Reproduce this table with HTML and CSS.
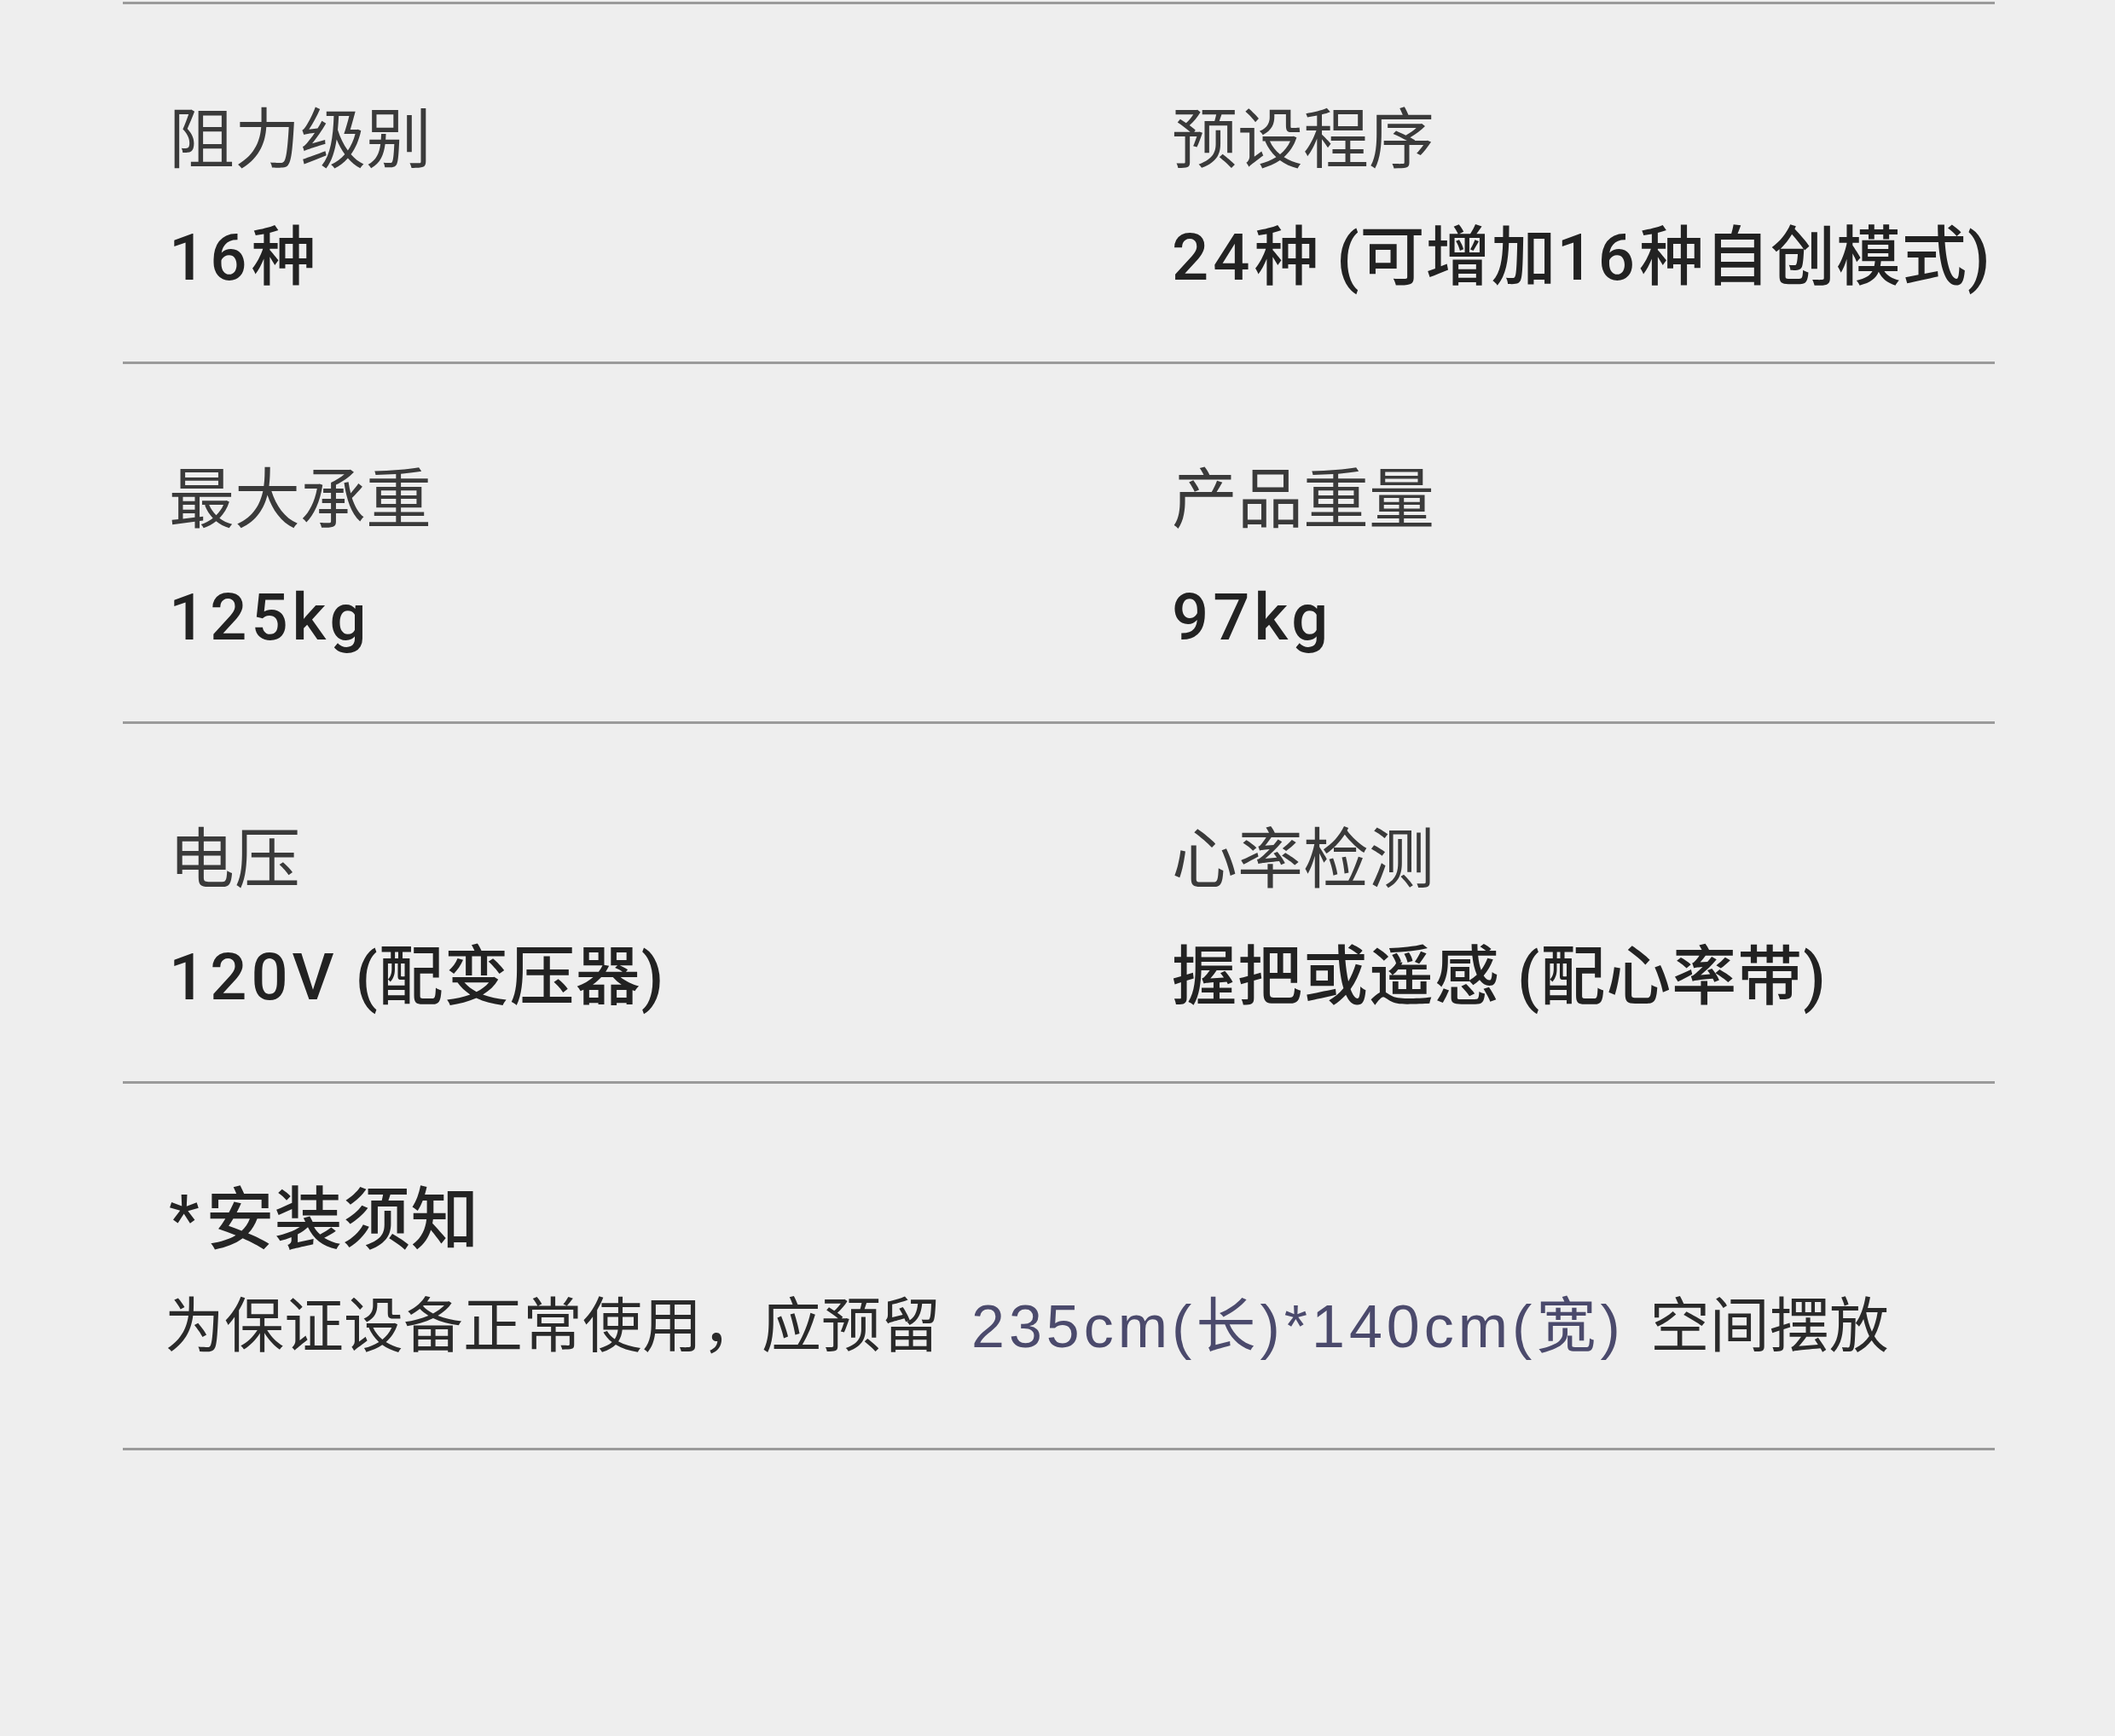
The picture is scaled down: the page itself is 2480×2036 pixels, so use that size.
FILE: index.html
```html
<!DOCTYPE html>
<html lang="zh-CN">
<head>
<meta charset="utf-8">
<title>规格参数</title>
<link rel="stylesheet" href="styles.css">
</head>
<body>
<main class="specs">
  <section class="row">
    <div class="cell">
      <div class="label">阻力级别</div>
      <div class="value"><span class="num">16</span>种</div>
    </div>
    <div class="cell">
      <div class="label">预设程序</div>
      <div class="value"><span class="num">24</span>种 (可增加<span class="num">16</span>种自创模式)</div>
    </div>
  </section>
  <section class="row">
    <div class="cell">
      <div class="label">最大承重</div>
      <div class="value"><span class="num">125kg</span></div>
    </div>
    <div class="cell">
      <div class="label">产品重量</div>
      <div class="value"><span class="num">97kg</span></div>
    </div>
  </section>
  <section class="row">
    <div class="cell">
      <div class="label">电压</div>
      <div class="value"><span class="num">120V</span> (配变压器)</div>
    </div>
    <div class="cell">
      <div class="label">心率检测</div>
      <div class="value">握把或遥感 (配心率带)</div>
    </div>
  </section>
  <section class="note">
    <div class="note-title"><span class="star">*</span>安装须知</div>
    <p class="note-text">为保证设备正常使用，应预留<span class="dim">235cm(长)*140cm(宽)</span>空间摆放</p>
  </section>
</main>
</body>
</html>
```
FILE: styles.css
```css
html, body {
  margin: 0;
  padding: 0;
  background: #eeeeee;
}
body {
  width: 2480px;
  height: 2036px;
  overflow: hidden;
  font-family: "Liberation Sans", "Noto Sans CJK SC", sans-serif;
}
.specs {
  margin: 2px 0 0 144px;
  width: 2195px;
  border-top: 3px solid #9a9a9a;
}
.row {
  display: grid;
  grid-template-columns: 1176px 1fr;
  padding: 121px 0 84px 54px;
  border-bottom: 3px solid #9a9a9a;
}
.cell {
  display: flex;
  flex-direction: column;
  gap: 61px;
}
.label {
  font-size: 77px;
  line-height: 1;
  font-weight: 400;
  color: #3a3a3a;
}
.value {
  font-family: Roboto, "Noto Sans CJK SC", sans-serif;
  font-size: 76px;
  line-height: 1;
  font-weight: 500;
  letter-spacing: 1px;
  color: #222222;
  white-space: nowrap;
}
.num {
  letter-spacing: 5px;
}
.note {
  padding: 120px 0 107px 54px;
  border-bottom: 3px solid #9a9a9a;
}
.note-title {
  font-family: Roboto, "Noto Sans CJK SC", sans-serif;
  font-size: 80px;
  line-height: 1;
  font-weight: 500;
  color: #242424;
}
.star {
  margin-right: 8px;
}
.note-text {
  margin: 50px 0 0 -5px;
  font-size: 70px;
  line-height: 1;
  font-weight: 400;
  color: #2a2a2a;
  white-space: nowrap;
}
.dim {
  color: #4b4a6c;
  letter-spacing: 5px;
  margin: 0 30px 0 36px;
}
```
